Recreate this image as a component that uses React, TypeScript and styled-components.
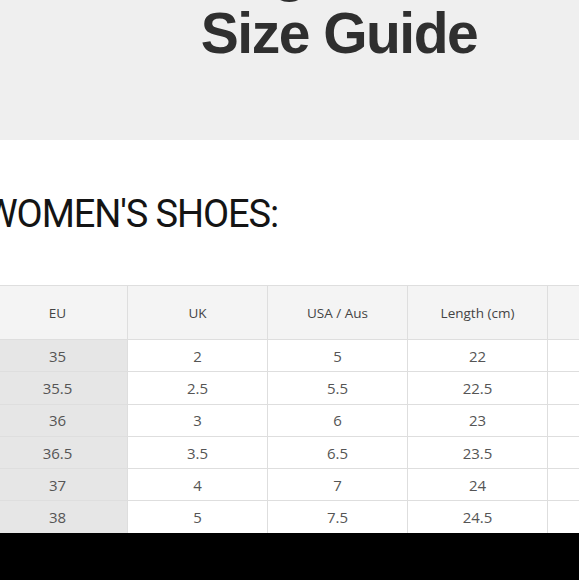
import React from "react";
import styled, { createGlobalStyle } from "styled-components";

const GlobalStyle = createGlobalStyle`
  html, body {
    margin: 0;
    padding: 0;
    background: #ffffff;
    overflow: hidden;
  }
  * { box-sizing: border-box; }
`;

const Page = styled.div`
  width: 579px;
  height: 580px;
  display: flex;
  flex-direction: column;
  overflow: hidden;
  background: #ffffff;
`;

const Hero = styled.header`
  flex: 0 0 140px;
  height: 140px;
  background: #efefef;
  overflow: hidden;
  display: flex;
  flex-direction: column;
  align-items: center;
  padding-left: 99px;
`;

const HeroTitle = styled.h1`
  margin: -61px 0 0;
  font-family: "Liberation Sans", Arial, sans-serif;
  font-weight: 700;
  font-size: 57px;
  line-height: 63px;
  letter-spacing: -1.5px;
  color: #2f2f2f;
  text-align: center;
  white-space: nowrap;
`;

const Line = styled.span`
  display: block;
`;

const Content = styled.section`
  flex: 1 1 auto;
  min-height: 0;
  overflow: hidden;
  margin-left: -13px;
  padding-top: 51px;
  display: flex;
  flex-direction: column;
  gap: 47px;
`;

const Heading = styled.h2`
  margin: 0 0 0 -3px;
  font-family: Roboto, "Liberation Sans", sans-serif;
  font-weight: 400;
  font-size: 38px;
  line-height: 47px;
  letter-spacing: -1.1px;
  color: #141414;
  white-space: nowrap;
`;

const Table = styled.table`
  border-collapse: collapse;
  table-layout: fixed;
  width: 701px;
  flex: 0 0 auto;
  font-family: "Open Sans", "Liberation Sans", sans-serif;
`;

const HeadCell = styled.th`
  width: 140px;
  height: 54px;
  padding: 0;
  background: #f4f4f4;
  border: 1px solid #dedede;
  font-size: 13.5px;
  font-weight: 500;
  color: #444;
  text-align: center;
  vertical-align: middle;
`;

const Cell = styled.td<{ $key?: boolean }>`
  height: 32.3px;
  padding: 0;
  background: ${(p) => (p.$key ? "#e6e6e6" : "#ffffff")};
  border: 1px solid #dedede;
  font-size: 15px;
  font-weight: 400;
  color: #555;
  text-align: center;
  vertical-align: middle;
`;

const BottomBar = styled.footer`
  flex: 0 0 47px;
  height: 47px;
  background: #000000;
`;

const headers = ["EU", "UK", "USA / Aus", "Length (cm)", "Length (in)"];

const rows: string[][] = [
  ["35", "2", "5", "22", "8.7"],
  ["35.5", "2.5", "5.5", "22.5", "8.9"],
  ["36", "3", "6", "23", "9.1"],
  ["36.5", "3.5", "6.5", "23.5", "9.3"],
  ["37", "4", "7", "24", "9.4"],
  ["38", "5", "7.5", "24.5", "9.6"],
];

export default function App() {
  return (
    <>
      <GlobalStyle />
      <Page>
        <Hero>
          <HeroTitle>
            <Line>Vagabond</Line>
            <Line>Size Guide</Line>
          </HeroTitle>
        </Hero>
        <Content>
          <Heading>WOMEN'S SHOES:</Heading>
          <Table>
            <thead>
              <tr>
                {headers.map((h) => (
                  <HeadCell key={h}>{h}</HeadCell>
                ))}
              </tr>
            </thead>
            <tbody>
              {rows.map((r) => (
                <tr key={r[0]}>
                  {r.map((v, i) => (
                    <Cell key={i} $key={i === 0}>
                      {v}
                    </Cell>
                  ))}
                </tr>
              ))}
            </tbody>
          </Table>
        </Content>
        <BottomBar />
      </Page>
    </>
  );
}
